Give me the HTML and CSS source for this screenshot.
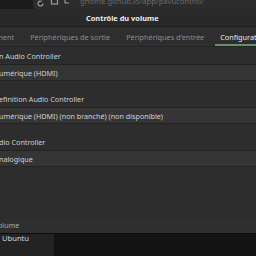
FILE: index.html
```html
<!DOCTYPE html>
<html lang="fr">

<head>
    <meta charset="UTF-8">
    <meta name="viewport" content="width=device-width, initial-scale=1.0">
    <title>Contrôle du volume</title>
    <link rel="stylesheet" href="styles.css">
</head>

<body>
    <div class="browser">
        <div class="urlbar">
            <svg class="icon" width="9" height="9" viewBox="0 0 9 9">
                <path d="M7 3.5a2.5 2.5 0 1 1-1-2" fill="none" stroke="#9a9a9a" stroke-width="1.2"/>
            </svg>
            <svg class="icon" width="9" height="9" viewBox="0 0 9 9">
                <rect x="1.5" y="-1" width="6" height="5" fill="none" stroke="#9a9a9a" stroke-width="1.2"/>
            </svg>
            <svg class="icon" width="6" height="9" viewBox="0 0 6 9">
                <path d="M1 0v3h4" fill="none" stroke="#9a9a9a" stroke-width="1.2"/>
            </svg>
            <span class="url">gnome.github.io/app/pavucontrol/</span>
        </div>
    </div>

    <div class="window">
        <div class="titlebar">
            <span class="title">Contrôle du volume</span>
        </div>

        <div class="tabs">
            <div class="tab first">Enregistrement</div>
            <div class="tab">Périphériques de sortie</div>
            <div class="tab">Périphériques d'entrée</div>
            <div class="tab active">Configuration</div>
        </div>

        <div class="content">
            <div class="card">
                <div class="card-label">n Audio Controller</div>
                <div class="combo">umérique (HDMI)</div>
            </div>

            <div class="card">
                <div class="card-label">efinition Audio Controller</div>
                <div class="combo">umérique (HDMI) (non branché) (non disponible)</div>
            </div>

            <div class="card">
                <div class="card-label">dio Controller</div>
                <div class="combo">nalogique</div>
            </div>

            <div class="spacer"></div>

            <div class="footer-label">olume</div>
        </div>
    </div>

    <div class="desktop">
        <div class="side">
            <span>Ubuntu</span>
        </div>
        <div class="dark"></div>
    </div>
</body>

</html>
```

FILE: styles.css
```css
* {
    margin: 0;
    padding: 0;
    box-sizing: border-box;
    font-family: 'Noto Sans', 'DejaVu Sans', sans-serif;
}

body {
    width: 256px;
    height: 256px;
    overflow: hidden;
    background-color: #121212;
    display: flex;
    flex-direction: column;
    font-size: 7.2px;
}

.browser {
    height: 9px;
    flex-shrink: 0;
    background-color: #1c1c1c;
    overflow: hidden;
}

.urlbar {
    margin-left: 33px;
    height: 9px;
    background-color: #2c2c2c;
    border-bottom-left-radius: 4px;
    display: flex;
    align-items: flex-start;
    padding-left: 3px;
    gap: 5px;
}

.urlbar .icon {
    display: block;
}

.url {
    color: #6a6a6a;
    font-size: 7.6px;
    line-height: 3px;
    margin-left: 5px;
    white-space: nowrap;
}

.window {
    background-color: #2d2d2d;
    display: flex;
    flex-direction: column;
    height: 224px;
    flex-shrink: 0;
    overflow: hidden;
}

.titlebar {
    height: 18px;
    flex-shrink: 0;
    background-color: #292929;
    display: flex;
    align-items: center;
    padding-left: 86px;
    border-bottom: 1px solid #1e1e1e;
}

.title {
    color: #ececec;
    font-weight: 700;
    font-size: 7.4px;
    white-space: nowrap;
}

.tabs {
    height: 20px;
    flex-shrink: 0;
    display: flex;
    align-items: stretch;
    background-color: #2e2e2e;
    border-bottom: 1px solid #242424;
    white-space: nowrap;
    font-size: 7.3px;
}

.tab {
    flex-shrink: 0;
    color: #8c8c8c;
    display: flex;
    align-items: center;
    padding: 2px 8px 0;
    border-bottom: 2px solid transparent;
}

.tab.first {
    margin-left: -47px;
}

.tab.active {
    color: #e8e8e8;
    border-bottom-color: #6b8a70;
    margin-left: 3px;
    padding-left: 5px;
}

.content {
    flex: 1;
    display: flex;
    flex-direction: column;
}

.card {
    display: flex;
    flex-direction: column;
    margin-bottom: 9px;
}

.card-label {
    height: 17px;
    display: flex;
    align-items: center;
    padding-top: 1px;
    color: #cfcfcf;
    margin-left: -1px;
    white-space: nowrap;
}

.combo {
    height: 17px;
    display: flex;
    align-items: center;
    color: #cfcfcf;
    background-color: #353535;
    border-top: 1px solid #232323;
    border-bottom: 1px solid #232323;
    white-space: nowrap;
    margin-left: -1px;
}

.spacer {
    flex: 1;
}

.footer-label {
    height: 14px;
    color: #a8a8a8;
    margin-left: -2px;
    padding-bottom: 3px;
    display: flex;
    align-items: center;
    background-color: #2f2f2f;
}

.desktop {
    flex: 1;
    display: flex;
    border-top: 1px solid #0c0c0c;
}

.side {
    width: 54px;
    background-color: #232323;
    color: #d6d6d6;
    padding-left: 2px;
    line-height: 9px;
    font-size: 7.6px;
}

.dark {
    flex: 1;
    background-color: #131313;
}
```
